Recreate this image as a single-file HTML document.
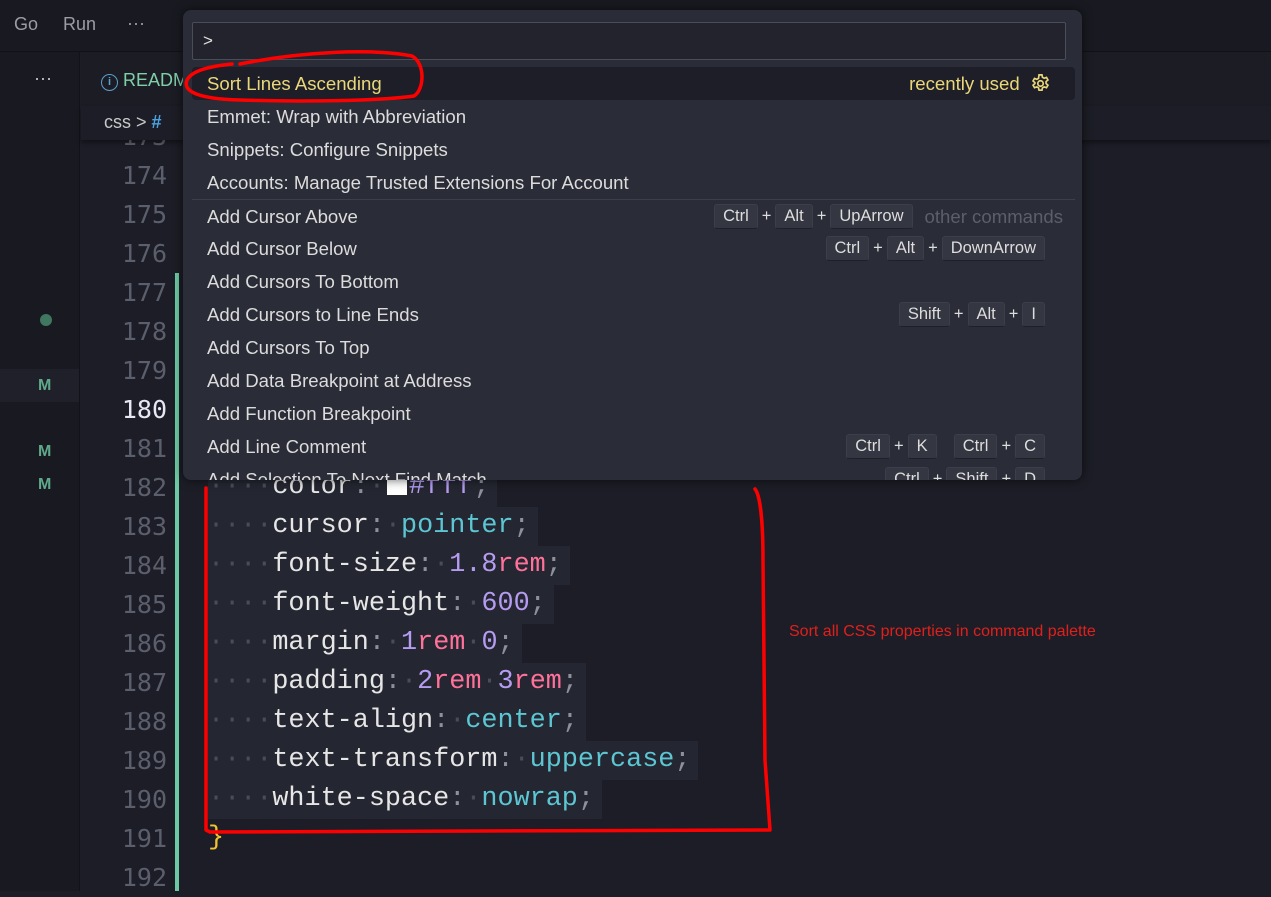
<!DOCTYPE html>
<html><head><meta charset="utf-8"><style>
*{margin:0;padding:0;box-sizing:border-box}
body{width:1271px;height:891px;overflow:hidden;background:#1c1d26;position:relative;font-family:"Liberation Sans",sans-serif}
.abs{position:absolute}
#title{left:0;top:0;width:1271px;height:52px;background:#191a21;border-bottom:1px solid #111218}
#title span{position:absolute;top:14px;font-size:18px;color:#9a9ca6}
#side{left:0;top:52px;width:80px;height:839px;background:#191a21;border-right:1px solid #121318}
.M{position:absolute;left:38px;font-size:16px;font-weight:bold;color:#5fa88a}
#tabs{left:81px;top:52px;width:1190px;height:54px;background:#1b1c24}
#crumb{left:81px;top:106px;width:1190px;height:34px;background:#1c1d26;box-shadow:0 3px 4px rgba(0,0,0,.35);z-index:2}
.ln{position:absolute;left:90px;width:77px;text-align:right;font-family:"DejaVu Sans Mono","Liberation Mono",monospace;font-size:25px;color:#5b5e6b;height:39px;line-height:39px}
.code{position:absolute;left:208px;height:39px;line-height:39px;font-family:"Liberation Mono",monospace;font-size:26.8px;color:#e6e6e6;white-space:pre;background:#242631;padding-right:8px}
.d{color:#4a4d59}.p{color:#8e919c}.c{color:#5cc6d3}.n{color:#b59cf0}.u{color:#ff7199}
#pal{left:183px;top:10px;width:899px;height:470px;background:#2a2c37;border-radius:8px;box-shadow:0 0 10px rgba(0,0,0,.6);z-index:5;overflow:hidden}
#inp{position:absolute;left:9px;top:12px;width:874px;height:38px;border:1px solid #4a4c58;background:#22232c;border-radius:2px;color:#e0e0e0;font-size:17px;padding:8px 10px}
.r{position:absolute;left:9px;width:883px;height:33px;line-height:33px;font-size:18.6px;color:#dcdcdc;padding-left:15px}
.sel{background:#1d1e27;border-radius:4px;color:#e9d77a}
.kb{position:absolute;top:0;right:26px;display:flex;align-items:center;height:33px;font-size:16.5px;color:#ddd}
.k{background:#343641;border:1px solid #3c3e4a;border-bottom-color:#1e1f27;border-radius:3px;padding:0 8px;height:25px;line-height:23px;margin:0 4px}
</style></head><body>
<div id="title" class="abs"><span style="left:14px">Go</span><span style="left:63px">Run</span><span style="left:127px;top:13px">···</span></div>
<div id="side" class="abs">
<div style="position:absolute;left:34px;top:16px;color:#c8c8c8;font-size:18px">···</div>
<div style="position:absolute;left:40px;top:262px;width:12px;height:12px;border-radius:50%;background:#3f7760"></div>
<div style="position:absolute;left:0;top:317px;width:79px;height:33px;background:#1f2029"></div>
<span class="M" style="top:325px">M</span><span class="M" style="top:391px">M</span><span class="M" style="top:424px">M</span>
</div>
<div id="tabs" class="abs"><div style="position:absolute;left:20px;top:18px;font-size:18px;color:#7fd0a8"><span style="display:inline-block;width:17px;height:17px;border:1.5px solid #5aa0d0;border-radius:50%;color:#5aa0d0;font-size:11px;text-align:center;line-height:14px;font-weight:bold;vertical-align:1px">i</span> READM</div></div>
<div id="crumb" class="abs"><div style="position:absolute;left:23px;top:6px;font-size:18px;color:#c8c8c8">css &gt; <b style="color:#4aa3e0">#</b></div></div>
<div class="abs" style="left:175px;top:273px;width:4px;height:618px;background:#6bc9a3"></div>

<div class="ln" style="top:117px">173</div>
<div class="ln" style="top:156px">174</div>
<div class="ln" style="top:195px">175</div>
<div class="ln" style="top:234px">176</div>
<div class="ln" style="top:273px">177</div>
<div class="ln" style="top:312px">178</div>
<div class="ln" style="top:351px">179</div>
<div class="ln" style="top:390px;color:#e8e6f5">180</div>
<div class="ln" style="top:429px">181</div>
<div class="ln" style="top:468px">182</div>
<div class="ln" style="top:507px">183</div>
<div class="ln" style="top:546px">184</div>
<div class="ln" style="top:585px">185</div>
<div class="ln" style="top:624px">186</div>
<div class="ln" style="top:663px">187</div>
<div class="ln" style="top:702px">188</div>
<div class="ln" style="top:741px">189</div>
<div class="ln" style="top:780px">190</div>
<div class="ln" style="top:819px">191</div>
<div class="ln" style="top:858px">192</div>

<div class="code" style="top:468px"><span class="d">····</span>color<span class="p">:</span><span class="d">·</span><span style="display:inline-block;width:20px;height:20px;background:#fff;vertical-align:-2px;margin:0 2px"></span><span class="n">#fff</span><span class="p">;</span></div>
<div class="code" style="top:507px"><span class="d">····</span>cursor<span class="p">:</span><span class="d">·</span><span class="c">pointer</span><span class="p">;</span></div>
<div class="code" style="top:546px"><span class="d">····</span>font-size<span class="p">:</span><span class="d">·</span><span class="n">1.8</span><span class="u">rem</span><span class="p">;</span></div>
<div class="code" style="top:585px"><span class="d">····</span>font-weight<span class="p">:</span><span class="d">·</span><span class="n">600</span><span class="p">;</span></div>
<div class="code" style="top:624px"><span class="d">····</span>margin<span class="p">:</span><span class="d">·</span><span class="n">1</span><span class="u">rem</span><span class="d">·</span><span class="n">0</span><span class="p">;</span></div>
<div class="code" style="top:663px"><span class="d">····</span>padding<span class="p">:</span><span class="d">·</span><span class="n">2</span><span class="u">rem</span><span class="d">·</span><span class="n">3</span><span class="u">rem</span><span class="p">;</span></div>
<div class="code" style="top:702px"><span class="d">····</span>text-align<span class="p">:</span><span class="d">·</span><span class="c">center</span><span class="p">;</span></div>
<div class="code" style="top:741px"><span class="d">····</span>text-transform<span class="p">:</span><span class="d">·</span><span class="c">uppercase</span><span class="p">;</span></div>
<div class="code" style="top:780px"><span class="d">····</span>white-space<span class="p">:</span><span class="d">·</span><span class="c">nowrap</span><span class="p">;</span></div>
<div class="code" style="top:819px;background:none;color:#f1c232">}</div>

<div id="pal" class="abs">
<div id="inp">&gt;</div>
<div class="r sel" style="top:57px">Sort Lines Ascending<div class="kb" style="right:24px;color:#e9d77a;font-size:18.6px">recently used&nbsp;&nbsp;<svg width="21" height="21" viewBox="0 0 20 20" fill="none" stroke="#e9d77a" stroke-width="1.6"><circle cx="10" cy="10" r="2.6"/><path d="M8.6 1.8h2.8l.5 2.3 1.6.9 2.2-.8 1.4 2.4-1.8 1.6v1.8l1.8 1.6-1.4 2.4-2.2-.8-1.6.9-.5 2.3H8.6l-.5-2.3-1.6-.9-2.2.8-1.4-2.4 1.8-1.6V9.2L2.9 7.6l1.4-2.4 2.2.8 1.6-.9z"/></svg></div></div>
<div class="r" style="top:90px">Emmet: Wrap with Abbreviation</div>
<div class="r" style="top:123px">Snippets: Configure Snippets</div>
<div class="r" style="top:156px">Accounts: Manage Trusted Extensions For Account</div>
<div style="position:absolute;left:9px;top:189px;width:883px;height:1px;background:#3d3f4b"></div>
<div class="r" style="top:190px">Add Cursor Above<div class="kb" style="right:12px"><span class="k">Ctrl</span>+<span class="k">Alt</span>+<span class="k">UpArrow</span><span style="color:#5c5f6b;margin-left:8px;font-size:18.6px">other commands</span></div></div>
<div class="r" style="top:222px">Add Cursor Below<div class="kb"><span class="k">Ctrl</span>+<span class="k">Alt</span>+<span class="k">DownArrow</span></div></div>
<div class="r" style="top:255px">Add Cursors To Bottom</div>
<div class="r" style="top:288px">Add Cursors to Line Ends<div class="kb"><span class="k">Shift</span>+<span class="k">Alt</span>+<span class="k">I</span></div></div>
<div class="r" style="top:321px">Add Cursors To Top</div>
<div class="r" style="top:354px">Add Data Breakpoint at Address</div>
<div class="r" style="top:387px">Add Function Breakpoint</div>
<div class="r" style="top:420px">Add Line Comment<div class="kb"><span class="k">Ctrl</span>+<span class="k">K</span>&nbsp;&nbsp;<span class="k">Ctrl</span>+<span class="k">C</span></div></div>
<div class="r" style="top:453px">Add Selection To Next Find Match<div class="kb"><span class="k">Ctrl</span>+<span class="k">Shift</span>+<span class="k">D</span></div></div>
</div>

<svg class="abs" style="left:0;top:0;z-index:10" width="1271" height="891" fill="none" stroke="#f00" stroke-width="3.5" stroke-linecap="round" stroke-linejoin="round">
<path d="M240 64 C300 52 370 48 412 56 C426 64 424 90 414 96 C380 101 300 102 240 100 C200 99 182 92 187 80 C192 70 212 66 232 64"/>
<path d="M755 489 C760 495 763 520 763 560 L765 760 L770 830 L210 832 L206 830 L206 488"/>
</svg>
<div class="abs" style="left:789px;top:623px;font-size:16px;color:#e0201c;z-index:10">Sort all CSS properties in command palette</div>
</body></html>
